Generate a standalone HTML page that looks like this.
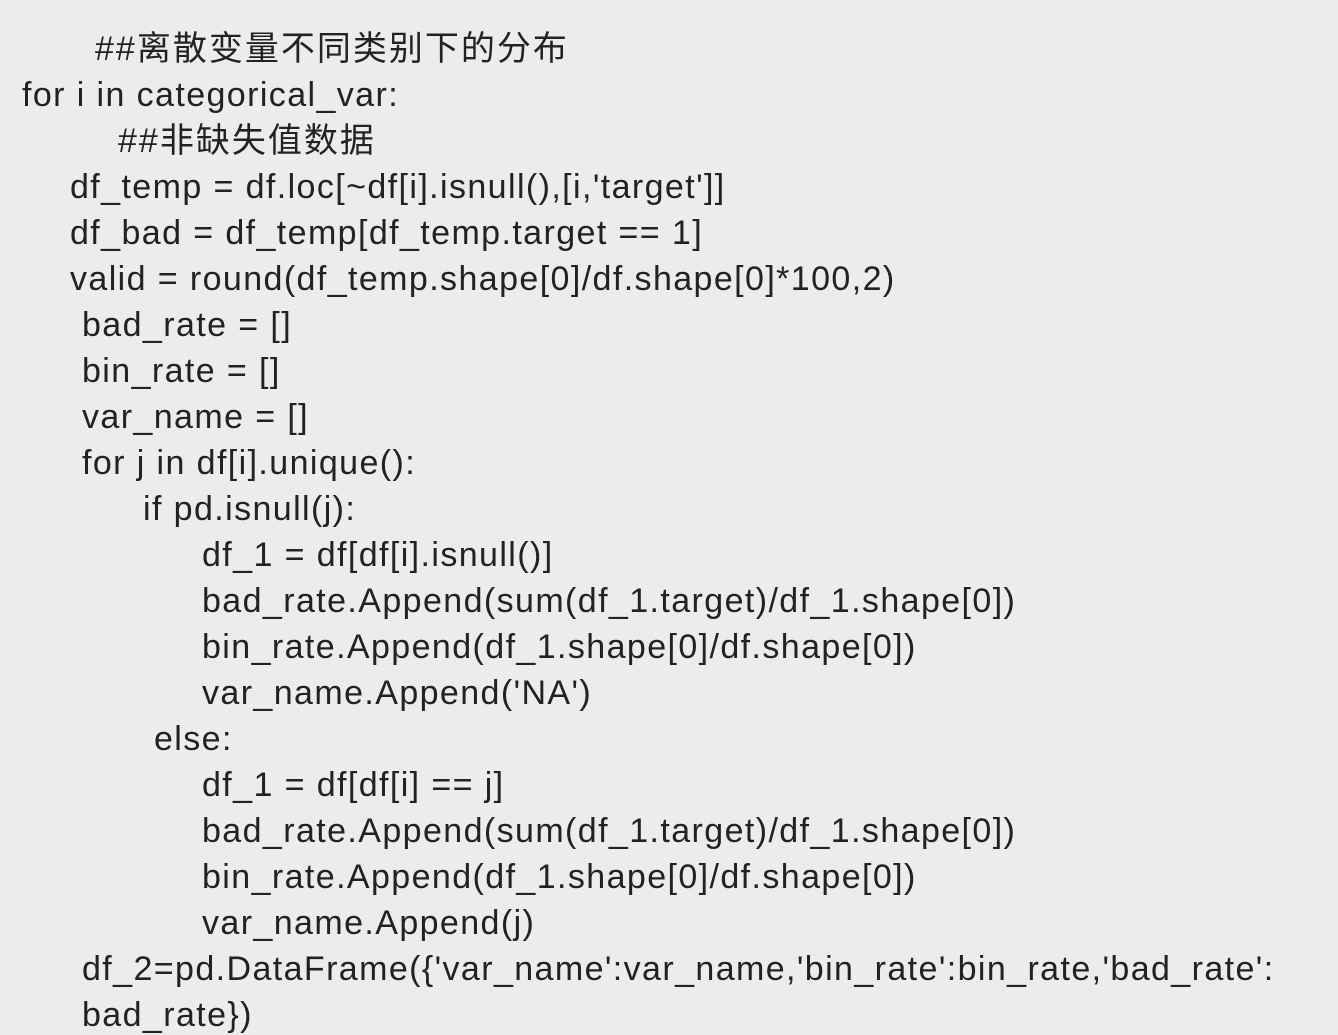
<!DOCTYPE html>
<html><head><meta charset="utf-8"><style>
html,body{margin:0;padding:0;}
body{width:1338px;height:1032px;background:#ececec;position:relative;overflow:hidden;font-family:"Liberation Sans","Noto Sans CJK SC",sans-serif;font-size:34px;letter-spacing:1.4px;color:#222;}
div{position:absolute;line-height:40px;white-space:pre;}
</style></head><body>
<div style="left:95px;top:29px;letter-spacing:2px">##离散变量不同类别下的分布</div>
<div style="left:22px;top:75px">for i in categorical_var:</div>
<div style="left:118px;top:121px;letter-spacing:2px">##非缺失值数据</div>
<div style="left:70px;top:167px">df_temp = df.loc[~df[i].isnull(),[i,'target']]</div>
<div style="left:70px;top:213px">df_bad = df_temp[df_temp.target == 1]</div>
<div style="left:70px;top:259px">valid = round(df_temp.shape[0]/df.shape[0]*100,2)</div>
<div style="left:82px;top:305px">bad_rate = []</div>
<div style="left:82px;top:351px">bin_rate = []</div>
<div style="left:82px;top:397px">var_name = []</div>
<div style="left:82px;top:443px">for j in df[i].unique():</div>
<div style="left:143px;top:489px">if pd.isnull(j):</div>
<div style="left:202px;top:535px">df_1 = df[df[i].isnull()]</div>
<div style="left:202px;top:581px">bad_rate.Append(sum(df_1.target)/df_1.shape[0])</div>
<div style="left:202px;top:627px">bin_rate.Append(df_1.shape[0]/df.shape[0])</div>
<div style="left:202px;top:673px">var_name.Append('NA')</div>
<div style="left:154px;top:719px">else:</div>
<div style="left:202px;top:765px">df_1 = df[df[i] == j]</div>
<div style="left:202px;top:811px">bad_rate.Append(sum(df_1.target)/df_1.shape[0])</div>
<div style="left:202px;top:857px">bin_rate.Append(df_1.shape[0]/df.shape[0])</div>
<div style="left:202px;top:903px">var_name.Append(j)</div>
<div style="left:82px;top:949px">df_2=pd.DataFrame({'var_name':var_name,'bin_rate':bin_rate,'bad_rate':</div>
<div style="left:82px;top:995px">bad_rate})</div>
</body></html>
